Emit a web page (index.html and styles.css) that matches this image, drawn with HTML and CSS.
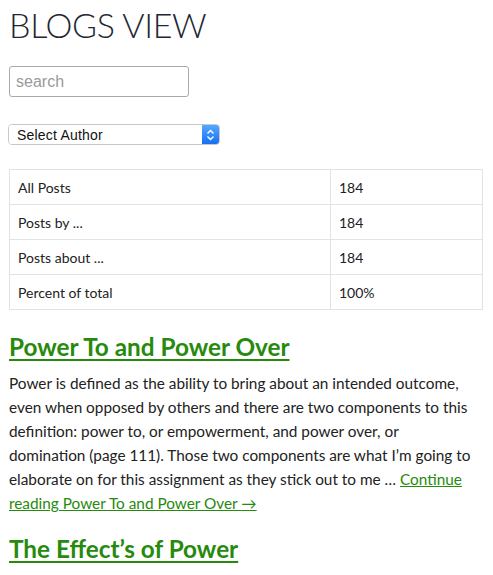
FILE: index.html
```html
<!DOCTYPE html>
<html>
<head>
<meta charset="utf-8">
<link rel="stylesheet" href="styles.css">
</head>
<body>
<div class="page">
  <h1 class="title">BLOGS VIEW</h1>
  <div class="search-row"><input class="search" type="text" placeholder="search"></div>
  <div class="select-wrap">
    <select class="select"><option>Select Author</option></select>
    <span class="select-arrows"><svg width="9" height="12" viewBox="0 0 9 12"><path d="M1.5 4.5 L4.5 1.5 L7.5 4.5 M1.5 7.5 L4.5 10.5 L7.5 7.5" fill="none" stroke="#fff" stroke-width="1.4"/></svg></span>
  </div>
  <table class="stats">
    <tr><td class="label">All Posts</td><td>184</td></tr>
    <tr><td class="label">Posts by ...</td><td>184</td></tr>
    <tr><td class="label">Posts about ...</td><td>184</td></tr>
    <tr><td class="label">Percent of total</td><td>100%</td></tr>
  </table>
  <article class="post">
    <h2 class="post-title"><a href="#">Power To and Power Over</a></h2>
    <p class="post-body">Power is defined as the ability to bring about an intended outcome, even when opposed by others and there are two components to this definition: power to, or empowerment, and power over, or domination (page 111). Those two components are what I’m going to elaborate on for this assignment as they stick out to me … <a href="#">Continue reading Power To and Power Over <span class="arrow">→</span></a></p>
  </article>
  <article class="post">
    <h2 class="post-title"><a href="#">The Effect’s of Power</a></h2>
  </article>
</div>
</body>
</html>
```
FILE: styles.css
```css
html, body {
  margin: 0;
  padding: 0;
  background: #fff;
}
body {
  font-family: Lato, "Open Sans", sans-serif;
  color: #222;
}
.page {
  padding: 0 10px 0 9px;
}
.title {
  font-family: Lato, sans-serif;
  font-weight: 300;
  font-size: 34px;
  line-height: 40px;
  margin: 5px 0 0 0;
  color: #1e2733;
  letter-spacing: -0.35px;
}
.search-row {
  margin-top: 21px;
}
.search {
  box-sizing: border-box;
  width: 180px;
  height: 31px;
  border: 1px solid #aaa;
  border-radius: 3px;
  padding: 0 6px;
  font-family: "Liberation Sans", Arial, sans-serif;
  font-size: 16px;
  color: #333;
  outline: none;
}
.search::placeholder {
  color: #9a9a9a;
}
.select-wrap {
  display: flex;
  width: 212px;
  height: 21px;
  margin: 27px 0 0 -1px;
  box-sizing: border-box;
  border: 1px solid #c8c8c8;
  border-radius: 4px;
  overflow: hidden;
  background: #fff;
}
.select {
  appearance: none;
  -webkit-appearance: none;
  flex: 1;
  border: none;
  background: #fff;
  font-family: "Liberation Sans", Arial, sans-serif;
  font-size: 14px;
  letter-spacing: 0.2px;
  color: #111;
  padding: 0 0 0 8px;
  margin: 0;
  outline: none;
}
.select-arrows {
  width: 17px;
  display: flex;
  align-items: center;
  justify-content: center;
  background: linear-gradient(#55a8ff, #1670f0);
}
.stats {
  margin-top: 24px;
  width: 474px;
  border-collapse: collapse;
  font-size: 14px;
  color: #222;
}
.stats td {
  border: 1px solid #e3e3e3;
  height: 35px;
  padding: 0 8px;
  box-sizing: border-box;
}
.stats td.label {
  width: 321px;
}
.post-title {
  margin: 22px 0 0 0;
  font-size: 24.3px;
  line-height: 30px;
  font-weight: 700;
}
.post-title a {
  color: #268a0c;
  text-decoration: underline;
  text-decoration-thickness: 2px;
  text-underline-offset: 3px;
}
.post-body {
  margin: 9px 0 0 0;
  max-width: 464px;
  font-size: 15.35px;
  line-height: 24px;
  color: #222;
}
.post-body a {
  color: #268a0c;
  text-decoration: underline;
}
.post + .post .post-title {
  margin-top: 19px;
}
```
